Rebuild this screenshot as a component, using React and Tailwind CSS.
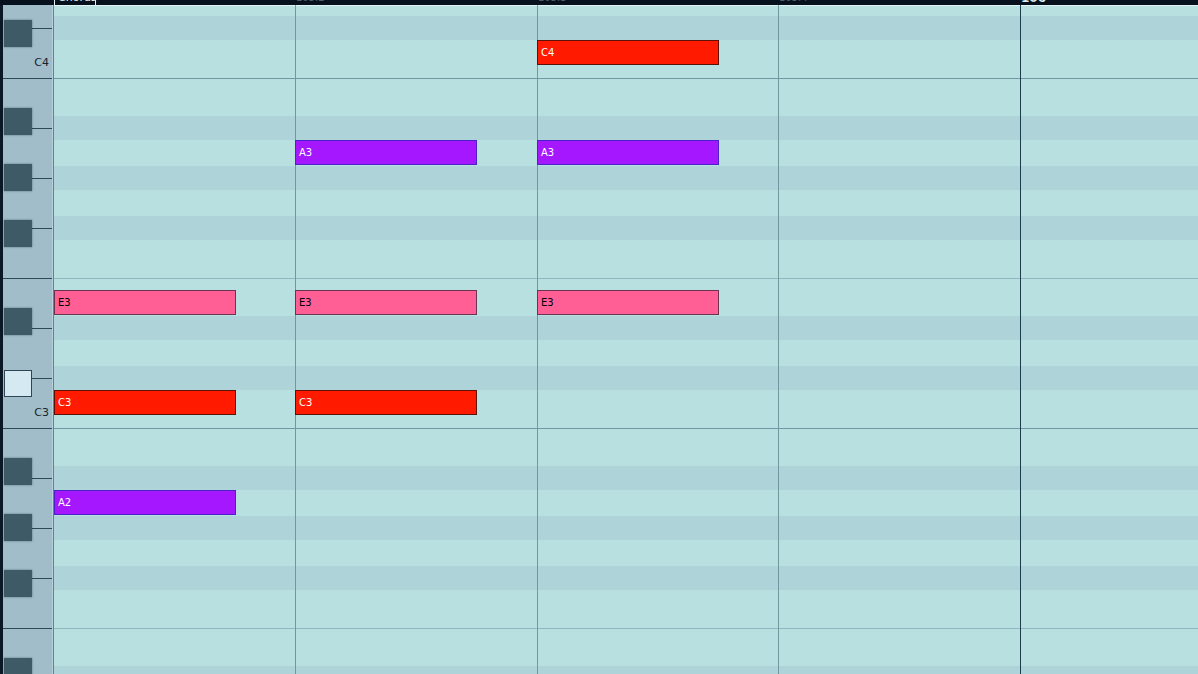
import React from 'react';

const stripes = [
  { h: 11, dark: false, top: true },
  { h: 24, dark: true },
  { h: 39, dark: false, line: 'dark' },
  { h: 37, dark: false },
  { h: 24, dark: true },
  { h: 26, dark: false },
  { h: 24, dark: true },
  { h: 26, dark: false },
  { h: 24, dark: true },
  { h: 39, dark: false, line: 'light' },
  { h: 37, dark: false },
  { h: 24, dark: true },
  { h: 26, dark: false },
  { h: 24, dark: true },
  { h: 39, dark: false, line: 'dark' },
  { h: 37, dark: false },
  { h: 24, dark: true },
  { h: 26, dark: false },
  { h: 24, dark: true },
  { h: 26, dark: false },
  { h: 24, dark: true },
  { h: 39, dark: false, line: 'light' },
  { h: 37, dark: false },
  { h: 20, dark: true },
];

// keyboard segments (line at bottom of each)
const segments = [
  { h: 24, full: false },
  { h: 50, full: true, label: 'C4' },
  { h: 50, full: false },
  { h: 50, full: false },
  { h: 50, full: false },
  { h: 50, full: true },
  { h: 50, full: false },
  { h: 50, full: false },
  { h: 50, full: true, label: 'C3' },
  { h: 50, full: false },
  { h: 50, full: false },
  { h: 50, full: false },
  { h: 50, full: true },
  { h: 60, full: null },
];

const blackKeys = [20, 108, 164, 220, 308, 370, 458, 514, 570, 658];

const kinds = {
  red: 'bg-[#ff1a00] border-[#5c1208] text-white',
  purple: 'bg-[#a517ff] border-[#4a22c8] text-white',
  pink: 'bg-[#ff5f94] border-[#6b3450] text-black',
};

const notes = [
  { x: 537, y: 40, name: 'C4', kind: 'red' },
  { x: 295, y: 140, name: 'A3', kind: 'purple' },
  { x: 537, y: 140, name: 'A3', kind: 'purple' },
  { x: 54, y: 290, name: 'E3', kind: 'pink' },
  { x: 295, y: 290, name: 'E3', kind: 'pink' },
  { x: 537, y: 290, name: 'E3', kind: 'pink' },
  { x: 54, y: 390, name: 'C3', kind: 'red' },
  { x: 295, y: 390, name: 'C3', kind: 'red' },
  { x: 54, y: 490, name: 'A2', kind: 'purple' },
];

const beats = [
  { x: 295, bar: false },
  { x: 537, bar: false },
  { x: 778, bar: false },
  { x: 1020, bar: true },
];

export default function App() {
  return (
    <div className="w-[1198px] h-[674px] overflow-hidden flex flex-col bg-[#07111d] font-['DejaVu_Sans',sans-serif]">
      {/* Ruler strip (mostly cut off) */}
      <div className="relative h-[5px] shrink-0 overflow-hidden bg-[#07111d]">
        <div className="absolute left-[54px] top-[-9px] w-[42px] h-[14px] border-l border-r border-[#dfeff3] pl-[3px] text-[11px] leading-[14px] text-[#e6f2f4]">
          Chorus
        </div>
        <div className="absolute left-[296px] top-[-8px] text-[10px] leading-[12px] text-[#4c5e6c]">105.2</div>
        <div className="absolute left-[538px] top-[-8px] text-[10px] leading-[12px] text-[#4c5e6c]">105.3</div>
        <div className="absolute left-[779px] top-[-8px] text-[10px] leading-[12px] text-[#4c5e6c]">105.4</div>
        <div className="absolute left-[1021px] top-[-8px] text-[12px] font-bold leading-[12px] text-[#dcecf0]">106</div>
      </div>

      <div className="flex flex-1 min-h-0">
        {/* left edge */}
        <div className="w-[3px] shrink-0 bg-[#0b1826]" />

        {/* keyboard */}
        <div className="relative w-[49px] shrink-0 bg-[#a1bdca] flex flex-col">
          {segments.map((s, i) => (
            <div key={i} style={{ height: s.h }} className="shrink-0 flex flex-col justify-end">
              {s.label && (
                <div className="self-end pr-[3px] mb-[9px] text-[11px] leading-[12px] text-[#16242c]">{s.label}</div>
              )}
              {s.full === true && <div className="h-px w-full bg-[#2e4855]" />}
              {s.full === false && <div className="h-px w-[20px] self-end bg-[#2e4855]" />}
            </div>
          ))}
          {blackKeys.map((y, i) => (
            <div
              key={i}
              style={{ top: y - 5 }}
              className={`absolute left-[1px] w-[28px] h-[27px] ${
                i === 5 ? 'bg-[#d4e9f1] border border-[#2f4652]' : 'bg-[#3e5a67] shadow-[0_0_2px_rgba(20,40,50,0.5)]'
              }`}
            />
          ))}
        </div>

        {/* keyboard / grid divider */}
        <div className="w-px shrink-0 bg-[#b9d0da]" />
        <div className="w-px shrink-0 bg-[#5b8299]" />

        {/* grid */}
        <div className="relative flex-1 flex flex-col">
          {stripes.map((s, i) => (
            <div
              key={i}
              style={{ height: s.h }}
              className={`shrink-0 ${s.dark ? 'bg-[#aed3d8]' : 'bg-[#b9e0e1]'} ${
                s.top ? 'border-t border-[#e2f3f3]' : ''
              } ${s.line === 'dark' ? 'border-b border-[#6e99a3]' : ''} ${
                s.line === 'light' ? 'border-b border-[#8fb7bf]' : ''
              }`}
            />
          ))}

          {beats.map((b) => (
            <div
              key={b.x}
              style={{ left: b.x - 54 }}
              className={`absolute top-0 bottom-0 w-px ${b.bar ? 'bg-[#1d3d4a]' : 'bg-[#6f999f]'}`}
            />
          ))}

          {notes.map((n, i) => (
            <div
              key={i}
              style={{ left: n.x - 54, top: n.y - 5 }}
              className={`absolute w-[182px] h-[25px] border flex items-center pl-[3px] pt-[1px] text-[10px] leading-none ${kinds[n.kind]}`}
            >
              {n.name}
            </div>
          ))}
        </div>
      </div>
    </div>
  );
}
